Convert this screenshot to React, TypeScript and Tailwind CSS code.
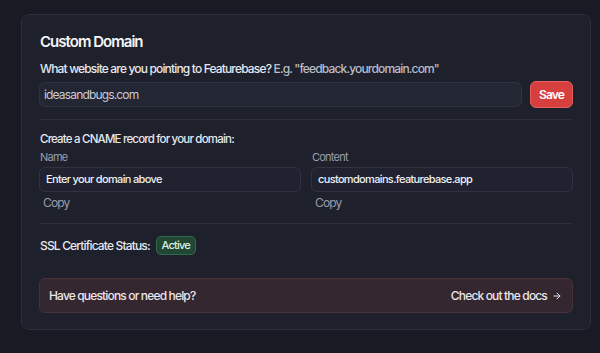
import { ArrowRight } from 'lucide-react';

function Divider() {
  return <div className="h-px w-full bg-[#2a2d3a]" />;
}

function CopyField({ label, value }: { label: string; value: string }) {
  return (
    <div className="flex flex-col">
      <div className="pl-px text-[11px] leading-[14px] tracking-[-0.07em] text-[#9a9eac]">{label}</div>
      <div className="mt-[3px] flex h-[25px] items-center rounded-md border border-[#2f3241] bg-[#20232f] pl-[6px] text-[11px] font-medium tracking-[-0.06em] text-[#eef0f5]">
        {value}
      </div>
      <button className="mt-[3px] self-start pl-[4px] text-left text-[12px] leading-[16px] tracking-[-0.07em] text-[#9a9eab]">
        Copy
      </button>
    </div>
  );
}

export default function App() {
  return (
    <div
      className="min-h-[353px] bg-[#191b24] pl-[21px] pr-[9px] pt-[14px]"
      style={{ fontFamily: 'Inter, "Noto Sans", sans-serif' }}
    >
      <div className="rounded-lg border border-[#2b2e3b] bg-[#1e212c] px-[17px] pb-[16px] pt-[17px]">
        <h2 className="pl-px text-[15px] font-semibold leading-[20px] tracking-[-0.065em] text-[#f4f5f8]">Custom Domain</h2>

        <div className="mt-[8px] pl-px text-[12px] font-medium leading-[18px] tracking-[-0.07em] text-[#e6e8ee]">
          What website are you pointing to Featurebase? <span className="text-[#b9bdc9]">E.g. "feedback.yourdomain.com"</span>
        </div>

        <div className="mt-[3px] flex items-center gap-[8px]">
          <div className="flex h-[25px] flex-1 items-center rounded-md border border-[#2f3241] bg-[#232633] pl-[4px] text-[12px] tracking-[-0.07em] text-[#c8cbd6]">
            ideasandbugs.com
          </div>
          <button className="flex h-[27px] w-[43px] items-center justify-center rounded-md border border-[#e0605c] bg-[#d63f3e] text-[12px] font-semibold tracking-[-0.07em] text-white">
            Save
          </button>
        </div>

        <div className="mt-[11px]">
          <Divider />
        </div>

        <div className="mt-[10px] pl-px text-[11.5px] font-medium leading-[18px] tracking-[-0.07em] text-[#e6e8ee]">
          Create a CNAME record for your domain:
        </div>

        <div className="mt-[2px] grid grid-cols-2 gap-[10px]">
          <CopyField label="Name" value="Enter your domain above" />
          <CopyField label="Content" value="customdomains.featurebase.app" />
        </div>

        <div className="mt-[12px]">
          <Divider />
        </div>

        <div className="mt-[12px] flex items-center gap-[6px] pl-px">
          <span className="text-[12px] font-medium tracking-[-0.07em] text-[#e6e8ee]">SSL Certificate Status:</span>
          <span className="flex h-[19px] w-[40px] items-center justify-center rounded-[5px] border border-[#2f6a4b] bg-[#214734] text-[11px] font-medium tracking-[-0.07em] text-[#d8f2e3]">
            Active
          </span>
        </div>

        <div className="mt-[23px] flex h-[35px] items-center justify-between rounded-md border border-[#4a3139] bg-[#35272f] pl-[9px] pr-[10px]">
          <span className="text-[12px] font-medium tracking-[-0.07em] text-[#ebe6e9]">Have questions or need help?</span>
          <span className="flex items-center gap-[5px] text-[12px] font-medium tracking-[-0.07em] text-[#ebe6e9]">
            Check out the docs
            <ArrowRight size={10} strokeWidth={2.4} />
          </span>
        </div>
      </div>
    </div>
  );
}
